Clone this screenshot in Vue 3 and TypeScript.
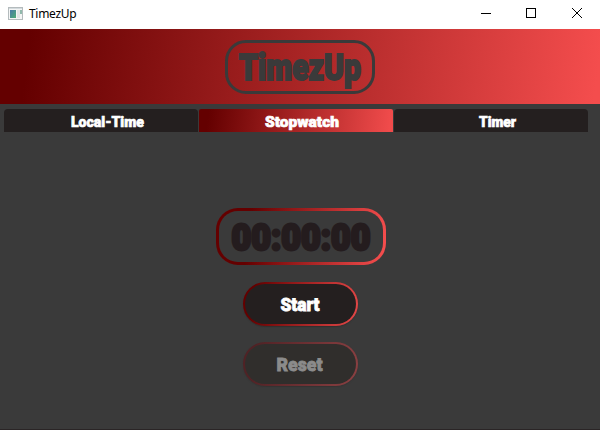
<script setup lang="ts">
import { ref } from 'vue'

interface Tab {
  name: string
  width: number
}

const tabs: Tab[] = [
  { name: 'Local-Time', width: 73 },
  { name: 'Stopwatch', width: 74 },
  { name: 'Timer', width: 37 },
]
const active = ref('Stopwatch')
const elapsed = ref('00:00:00')
</script>

<template>
  <div class="window">
    <div class="titlebar">
      <svg class="app-icon" width="15" height="13" viewBox="0 0 15 13">
        <defs>
          <linearGradient id="screen" x1="0" y1="0" x2="1" y2="1">
            <stop offset="0" stop-color="#4a78a8" />
            <stop offset="1" stop-color="#4fae74" />
          </linearGradient>
        </defs>
        <rect x=".5" y=".5" width="14" height="12" fill="#f4f5f5" stroke="#b4bbbd" />
        <path d="M1 1.5H14" stroke="#d3dadd" />
        <rect x="2" y="3" width="6" height="8" fill="url(#screen)" />
        <rect x="9" y="3" width="3" height="8" fill="#e2e4e5" />
        <rect x="12" y="3" width="2" height="4" fill="#91b9ac" />
      </svg>
      <span class="caption">TimezUp</span>
      <svg class="controls" width="102" height="10" viewBox="0 0 102 10" fill="none" stroke="#000">
        <path d="M0 5.5H10M45.5.5H54.5V9.5H45.5Z" shape-rendering="crispEdges" />
        <path d="M91 0L101 10M101 0L91 10" />
      </svg>
    </div>

    <header class="banner">
      <div class="logo">
        <svg width="144" height="48">
          <text class="logo-text" x="11" y="37" textLength="122" lengthAdjust="spacingAndGlyphs">TimezUp</text>
        </svg>
      </div>
    </header>

    <nav class="tabs">
      <button
        v-for="tab in tabs"
        :key="tab.name"
        class="tab"
        :class="{ active: tab.name === active }"
        @click="active = tab.name"
      >
        <svg :width="tab.width + 8" height="23">
          <text class="tab-text" x="4" y="17.5" :textLength="tab.width" lengthAdjust="spacingAndGlyphs">{{ tab.name }}</text>
        </svg>
      </button>
    </nav>

    <main class="panel">
      <div class="clock">
        <svg width="164" height="51">
          <text class="clock-text" x="12.5" y="38.5" textLength="139" lengthAdjust="spacingAndGlyphs">{{ elapsed }}</text>
        </svg>
      </div>
      <button class="action">
        <svg width="111" height="40">
          <text class="action-text" x="35.5" y="26.5" textLength="39" lengthAdjust="spacingAndGlyphs">Start</text>
        </svg>
      </button>
      <button class="action disabled" disabled>
        <svg width="111" height="40">
          <text class="action-text" x="31.5" y="26.5" textLength="46" lengthAdjust="spacingAndGlyphs">Reset</text>
        </svg>
      </button>
    </main>
  </div>
</template>

<style>
body {
  margin: 0;
}
</style>

<style scoped>
.window {
  box-sizing: border-box;
  display: flex;
  flex-direction: column;
  width: 600px;
  height: 430px;
  overflow: hidden;
  background: #3a3a3a;
  border-bottom: 1px solid #2a2526;
}
svg {
  display: block;
  overflow: visible;
}
button {
  border: 0;
  padding: 0;
  margin: 0;
}
.titlebar {
  display: flex;
  align-items: center;
  flex: none;
  box-sizing: border-box;
  height: 29px;
  padding: 0 17px 3px 8px;
  background: #fff;
}
.caption {
  margin-left: 6px;
  font: 12px/16px "Noto Sans", "Open Sans", sans-serif;
  letter-spacing: -0.3px;
  color: #000;
  padding-top: 2px;
}
.controls {
  margin-left: auto;
}
.banner {
  display: flex;
  justify-content: center;
  flex: none;
  box-sizing: border-box;
  height: 75px;
  padding-top: 11px;
  background: linear-gradient(97deg, #640000 5%, #f44d4d 99%);
}
.logo {
  width: 144px;
  height: 48px;
  border: 3px solid #3a3a3a;
  border-radius: 21px;
}
text {
  font-family: Roboto, "Liberation Sans", sans-serif;
  font-weight: 900;
  stroke-linejoin: miter;
}
.logo-text {
  font-size: 36px;
  fill: #3a3a3a;
  stroke: #3a3a3a;
  stroke-width: 2px;
}
.tabs {
  display: flex;
  gap: 1px;
  flex: none;
  padding: 5px 12px 0 4px;
}
.tab {
  display: flex;
  justify-content: center;
  box-sizing: border-box;
  width: 194px;
  height: 23px;
  padding-left: 12px;
  border-radius: 4px 4px 0 0;
  background: #241f1f;
}
.tab.active {
  border-radius: 2px 2px 0 0;
  background: linear-gradient(97deg, #640000 5%, #f04b4b 98%);
}
.tab-text {
  font-size: 15.5px;
  fill: #fff;
  stroke: #fff;
  stroke-width: 0.7px;
}
.panel {
  display: flex;
  flex-direction: column;
  align-items: center;
  padding: 76px 0 0 1px;
}
.clock {
  width: 164px;
  height: 51px;
  margin-bottom: 17px;
  border: 3px solid transparent;
  border-radius: 22px;
  background:
    linear-gradient(#3a3a3a, #3a3a3a) padding-box,
    linear-gradient(97deg, #640000 20%, #f44d4d 98%) border-box;
}
.clock-text {
  font-size: 37px;
  fill: #241c1e;
  stroke: #241c1e;
  stroke-width: 3px;
}
.action {
  box-sizing: border-box;
  width: 115px;
  height: 44px;
  margin-bottom: 16px;
  border: 2px solid transparent;
  border-radius: 22px;
  background:
    linear-gradient(#241f1f, #241f1f) padding-box,
    linear-gradient(100deg, #640000 10%, #e64848 100%) border-box;
  box-shadow: 0 1px 1px #303030;
}
.action-text {
  font-size: 19px;
  fill: #fff;
  stroke: #fff;
  stroke-width: 0.8px;
}
.action.disabled {
  background:
    linear-gradient(#302e2c, #302e2c) padding-box,
    linear-gradient(100deg, #502225 10%, #8b4042 100%) border-box;
  box-shadow: 0 1px 1px #343434;
}
.disabled .action-text {
  fill: #8b8b8b;
  stroke: #8b8b8b;
}
</style>
